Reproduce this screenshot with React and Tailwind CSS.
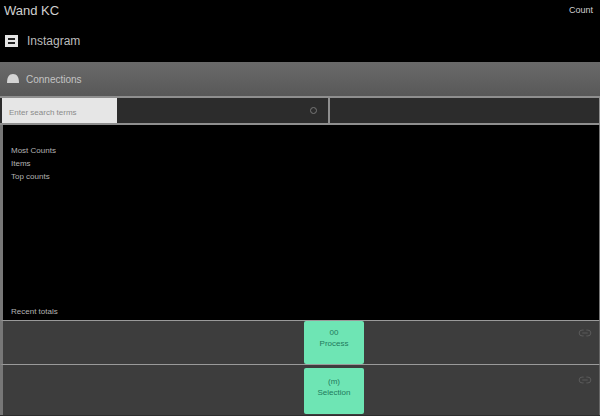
import { Link2 } from "lucide-react";

function ActionRow({ top, bottom, className }) {
  return (
    <div className={`flex border-t border-t-[#9a9a9a] border-l-[3px] border-l-[#777] border-r border-r-[#666] bg-[#3d3d3d] ${className}`}>
      <div className="w-[301px]" />
      <button className="flex w-[60px] flex-col items-center justify-center gap-[1px] rounded-[2px] bg-[#6ee5b4] pb-[8px] text-[8px] leading-[10px] text-[#1f7a5c]">
        <span>{top}</span>
        <span>{bottom}</span>
      </button>
      <div className="flex flex-1 justify-end pr-[7px] pt-[5px]">
        <Link2 size={14} strokeWidth={1.5} className="text-[#5f5f5f]" />
      </div>
    </div>
  );
}

export default function App() {
  return (
    <div className="flex h-[416px] w-[600px] flex-col overflow-hidden bg-black font-['Liberation_Sans',sans-serif]">
      <header className="h-[62px] shrink-0">
        <div className="flex items-center justify-between pl-[4px] pr-[7px] pt-[3px]">
          <span className="text-[13px] leading-[15px] text-[#d0d0d0]">Wand KC</span>
          <span className="text-[9px] leading-[15px] text-[#d0d0d0]">Count</span>
        </div>
        <div className="mt-[14px] flex items-center gap-[9px] pl-[5px]">
          <div className="flex h-[12px] w-[13px] flex-col justify-center gap-[2px] bg-[#e4e4e4] px-[3px]">
            <div className="h-[2px] bg-[#222]" />
            <div className="h-[2px] bg-[#222]" />
          </div>
          <span className="text-[12px] leading-[18px] text-[#bcbcbc]">Instagram</span>
        </div>
      </header>

      <div className="flex h-[34px] shrink-0 items-center gap-[7px] bg-gradient-to-b from-[#6a6a6a] to-[#585858] pl-[7px]">
        <svg width="12" height="9" viewBox="0 0 12 9" className="mt-[-2px]">
          <path d="M0 9 C0 3 2 0 6 0 C10 0 12 3 12 9 Z" fill="#d4d4d4" />
        </svg>
        <span className="text-[10px] text-[#c4c4c4]">Connections</span>
      </div>

      <div className="flex h-[29px] shrink-0 border-y-2 border-[#8f8f8f] bg-[#2c2c2c] pl-[2px]">
        <div className="flex w-[115px] items-center bg-[#e6e6e6] pl-[7px] pt-[5px] text-[8px] text-[#8a8a8a]">
          Enter search terms
        </div>
        <div className="flex w-[213px] items-center justify-end border-r-2 border-[#8f8f8f] pr-[11px]">
          <div className="h-[7px] w-[7px] rounded-full border border-[#777]" />
        </div>
        <div className="flex-1 border-r border-[#8f8f8f]" />
      </div>

      <main className="flex h-[195px] shrink-0 flex-col justify-between border-l-[3px] border-r border-[#777] pb-[3px] pl-[8px] pt-[21px]">
        <div className="flex flex-col gap-[3px] text-[8px] leading-[10px] text-[#b4b4b4]">
          <span>Most Counts</span>
          <span>Items</span>
          <span>Top counts</span>
        </div>
        <span className="text-[8px] leading-[10px] text-[#b4b4b4]">Recent totals</span>
      </main>

      <ActionRow top="00" bottom="Process" className="h-[44px]" />
      <ActionRow top="(m)" bottom="Selection" className="h-[51px] pt-[3px] pb-[1px]" />
      <div className="flex-1 bg-[#2e2e2e]" />
    </div>
  );
}
